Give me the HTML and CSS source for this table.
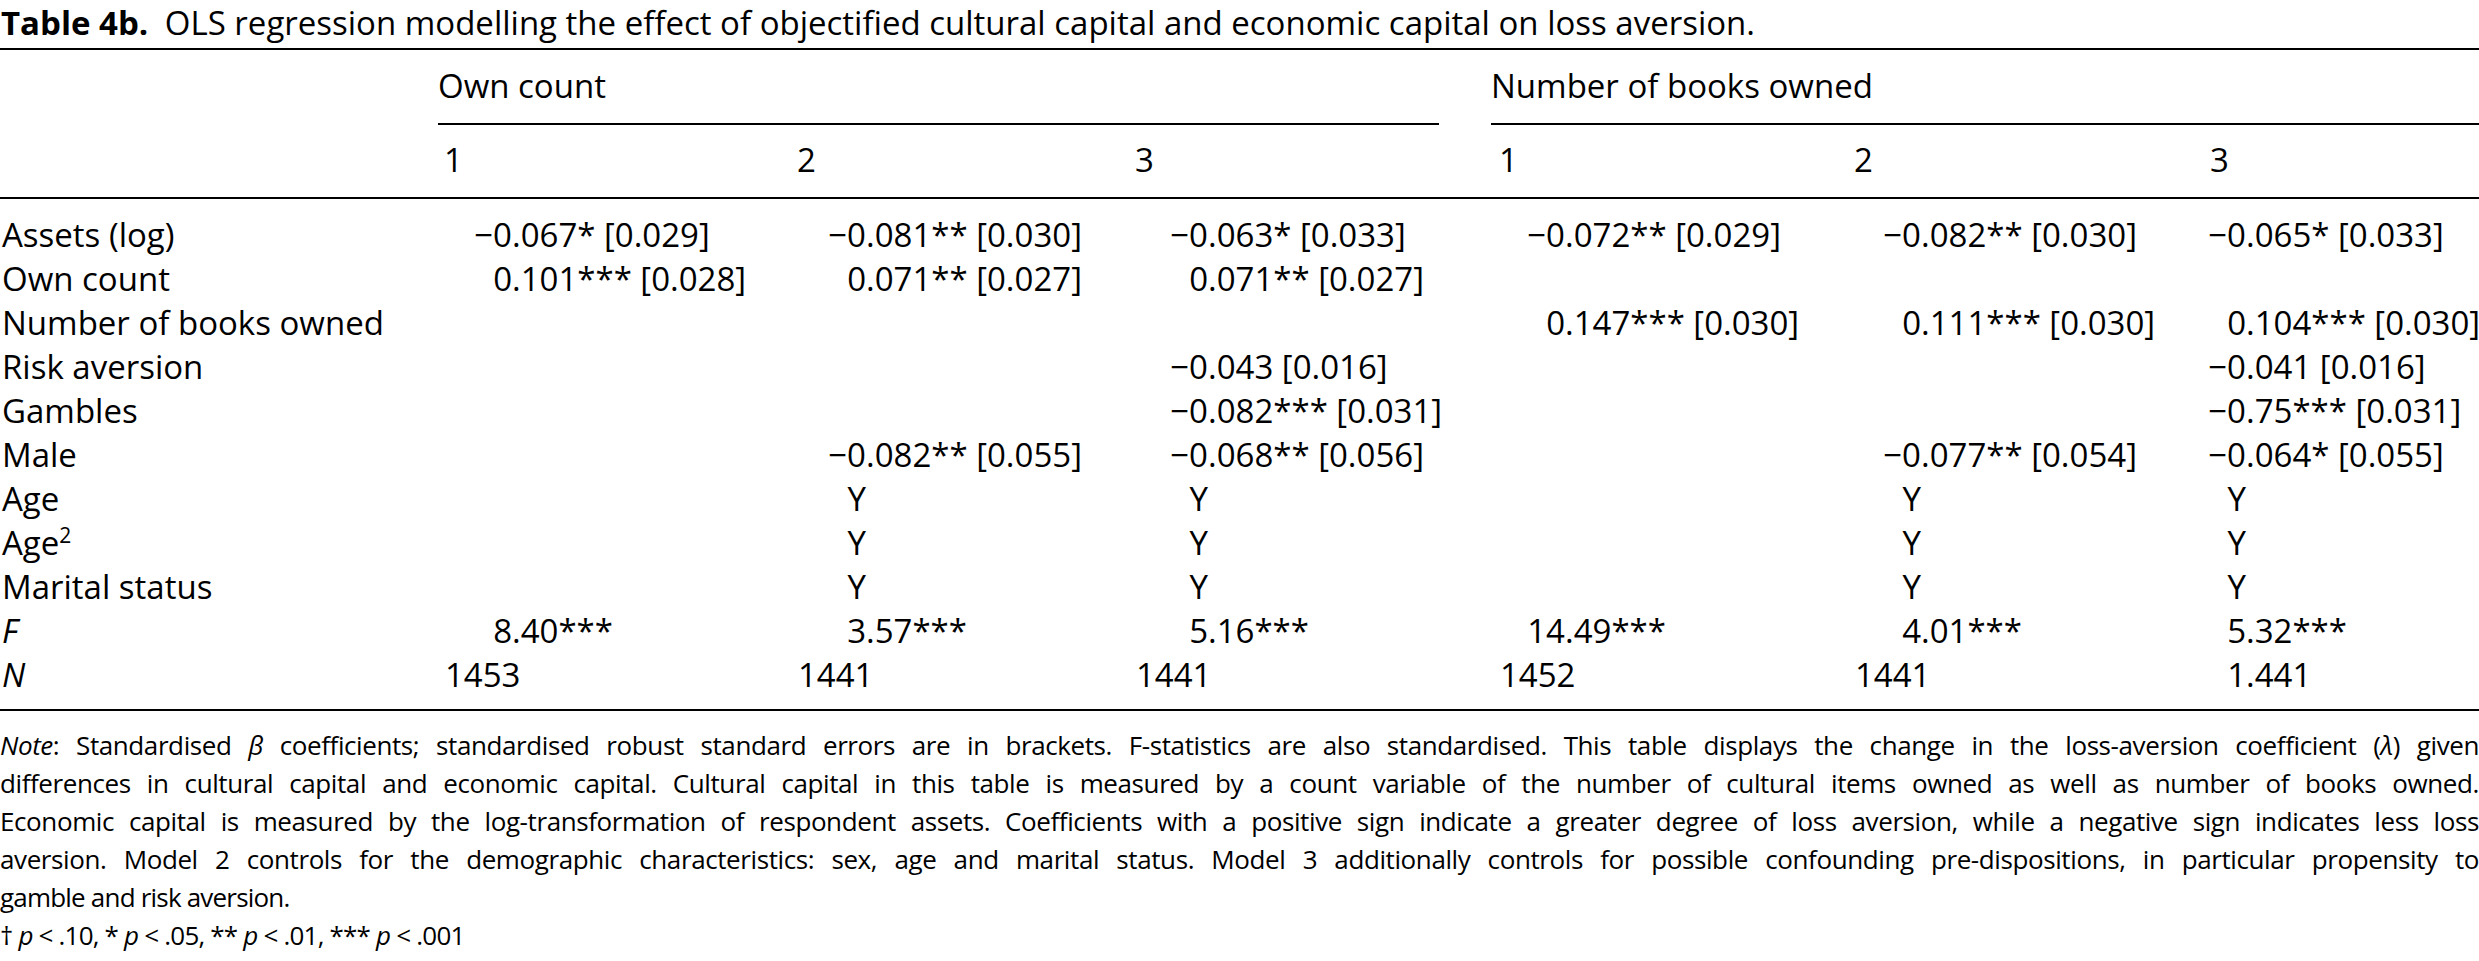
FILE: index.html
```html
<!DOCTYPE html>
<html lang="en">
<head>
<meta charset="utf-8">
<title>Table 4b</title>
<link rel="stylesheet" href="styles.css">
</head>
<body>
<div class="caption"><b>Table 4b.</b> OLS regression modelling the effect of objectified cultural capital and economic capital on loss aversion.</div>
<div class="table">
  <div class="head">
    <div class="row grp-row">
      <div class="grp g1">Own count</div>
      <div class="grp g2">Number of books owned</div>
    </div>
    <div class="row model-row">
      <div></div><div>1</div><div>2</div><div>3</div><div>1</div><div>2</div><div>3</div>
    </div>
  </div>
  <div class="body">
    <div class="row">
      <div>Assets (log)</div>
      <div><span class="i">−0</span>.067* [0.029]</div>
      <div><span class="i">−0</span>.081** [0.030]</div>
      <div><span class="i">−0</span>.063* [0.033]</div>
      <div><span class="i">−0</span>.072** [0.029]</div>
      <div><span class="i">−0</span>.082** [0.030]</div>
      <div><span class="i">−0</span>.065* [0.033]</div>
    </div>
    <div class="row">
      <div>Own count</div>
      <div><span class="i">0</span>.101*** [0.028]</div>
      <div><span class="i">0</span>.071** [0.027]</div>
      <div><span class="i">0</span>.071** [0.027]</div>
      <div></div><div></div><div></div>
    </div>
    <div class="row">
      <div>Number of books owned</div>
      <div></div><div></div><div></div>
      <div><span class="i">0</span>.147*** [0.030]</div>
      <div><span class="i">0</span>.111*** [0.030]</div>
      <div><span class="i">0</span>.104*** [0.030]</div>
    </div>
    <div class="row">
      <div>Risk aversion</div>
      <div></div><div></div>
      <div><span class="i">−0</span>.043 [0.016]</div>
      <div></div><div></div>
      <div><span class="i">−0</span>.041 [0.016]</div>
    </div>
    <div class="row">
      <div>Gambles</div>
      <div></div><div></div>
      <div><span class="i">−0</span>.082*** [0.031]</div>
      <div></div><div></div>
      <div><span class="i">−0</span>.75*** [0.031]</div>
    </div>
    <div class="row">
      <div>Male</div>
      <div></div>
      <div><span class="i">−0</span>.082** [0.055]</div>
      <div><span class="i">−0</span>.068** [0.056]</div>
      <div></div>
      <div><span class="i">−0</span>.077** [0.054]</div>
      <div><span class="i">−0</span>.064* [0.055]</div>
    </div>
    <div class="row">
      <div>Age</div>
      <div></div>
      <div><span class="i">Y</span></div>
      <div><span class="i">Y</span></div>
      <div></div>
      <div><span class="i">Y</span></div>
      <div><span class="i">Y</span></div>
    </div>
    <div class="row">
      <div>Age<sup>2</sup></div>
      <div></div>
      <div><span class="i">Y</span></div>
      <div><span class="i">Y</span></div>
      <div></div>
      <div><span class="i">Y</span></div>
      <div><span class="i">Y</span></div>
    </div>
    <div class="row">
      <div>Marital status</div>
      <div></div>
      <div><span class="i">Y</span></div>
      <div><span class="i">Y</span></div>
      <div></div>
      <div><span class="i">Y</span></div>
      <div><span class="i">Y</span></div>
    </div>
    <div class="row">
      <div><em>F</em></div>
      <div><span class="i">8</span>.40***</div>
      <div><span class="i">3</span>.57***</div>
      <div><span class="i">5</span>.16***</div>
      <div><span class="i">14</span>.49***</div>
      <div><span class="i">4</span>.01***</div>
      <div><span class="i">5</span>.32***</div>
    </div>
    <div class="row n-row">
      <div><em>N</em></div>
      <div class="n">1453</div>
      <div class="n">1441</div>
      <div class="n">1441</div>
      <div class="n">1452</div>
      <div class="n">1441</div>
      <div><span class="i">1</span>.441</div>
    </div>
  </div>
</div>
<div class="notes">
  <span class="ln"><em>Note</em>: Standardised <em>β</em> coefficients; standardised robust standard errors are in brackets. F-statistics are also standardised. This table displays the change in the loss-aversion coefficient (<em>λ</em>) given</span>
  <span class="ln">differences in cultural capital and economic capital. Cultural capital in this table is measured by a count variable of the number of cultural items owned as well as number of books owned.</span>
  <span class="ln">Economic capital is measured by the log-transformation of respondent assets. Coefficients with a positive sign indicate a greater degree of loss aversion, while a negative sign indicates less loss</span>
  <span class="ln">aversion. Model 2 controls for the demographic characteristics: sex, age and marital status. Model 3 additionally controls for possible confounding pre-dispositions, in particular propensity to</span>
  <span class="ln last">gamble and risk aversion.</span>
  <span class="ln last">† <em>p</em> &lt; .10, * <em>p</em> &lt; .05, ** <em>p</em> &lt; .01, *** <em>p</em> &lt; .001</span>
</div>
</body>
</html>
```

FILE: styles.css
```css
html, body {
  margin: 0;
  padding: 0;
  background: #fff;
}
body {
  width: 2479px;
  overflow: hidden;
  color: #000;
  font-family: "Open Sans", "Liberation Sans", sans-serif;
}
.caption {
  font-size: 33px;
  line-height: 45px;
  white-space: nowrap;
  padding-left: 1px;
}
.caption b {
  font-weight: 700;
  margin-right: 8px;
}
.table {
  margin-top: 3px;
  border-top: 2px solid #000;
  border-bottom: 2px solid #000;
  font-size: 33px;
  line-height: 44px;
}
.row {
  display: grid;
  grid-template-columns: 438px 353px 338px 364px 355px 356px 275px;
  white-space: nowrap;
}
.grp-row {
  padding-top: 14px;
}
.grp {
  padding-bottom: 15px;
  border-bottom: 2px solid #000;
}
.g1 {
  grid-column: 2 / 5;
  margin-right: 54px;
}
.g2 {
  grid-column: 5 / 8;
  margin-left: -2px;
}
.model-row {
  padding-top: 13px;
  padding-bottom: 15px;
  border-bottom: 2px solid #000;
}
.model-row > div {
  padding-left: 6px;
}
.body {
  padding-top: 14px;
  padding-bottom: 12px;
}
.body .row > div:first-child {
  padding-left: 2px;
}
.i {
  display: inline-block;
  text-align: right;
}
.body .row > :nth-child(2) .i { width: 74px; }
.body .row > :nth-child(3) .i { width: 75px; }
.body .row > :nth-child(4) .i { width: 79px; }
.body .row > :nth-child(5) .i { width: 72px; }
.body .row > :nth-child(6) .i { width: 73px; }
.body .row > :nth-child(7) .i { width: 42px; }
.n {
  padding-left: 7px;
}
sup {
  font-size: 21px;
  line-height: 0;
  vertical-align: 12px;
}
.notes {
  margin-top: 15px;
  font-size: 26px;
  line-height: 38px;
}
.ln {
  display: block;
  letter-spacing: -0.4px;
  text-align: justify;
  text-align-last: justify;
}
.ln.last {
  letter-spacing: -0.8px;
  text-align: left;
  text-align-last: left;
}
```
